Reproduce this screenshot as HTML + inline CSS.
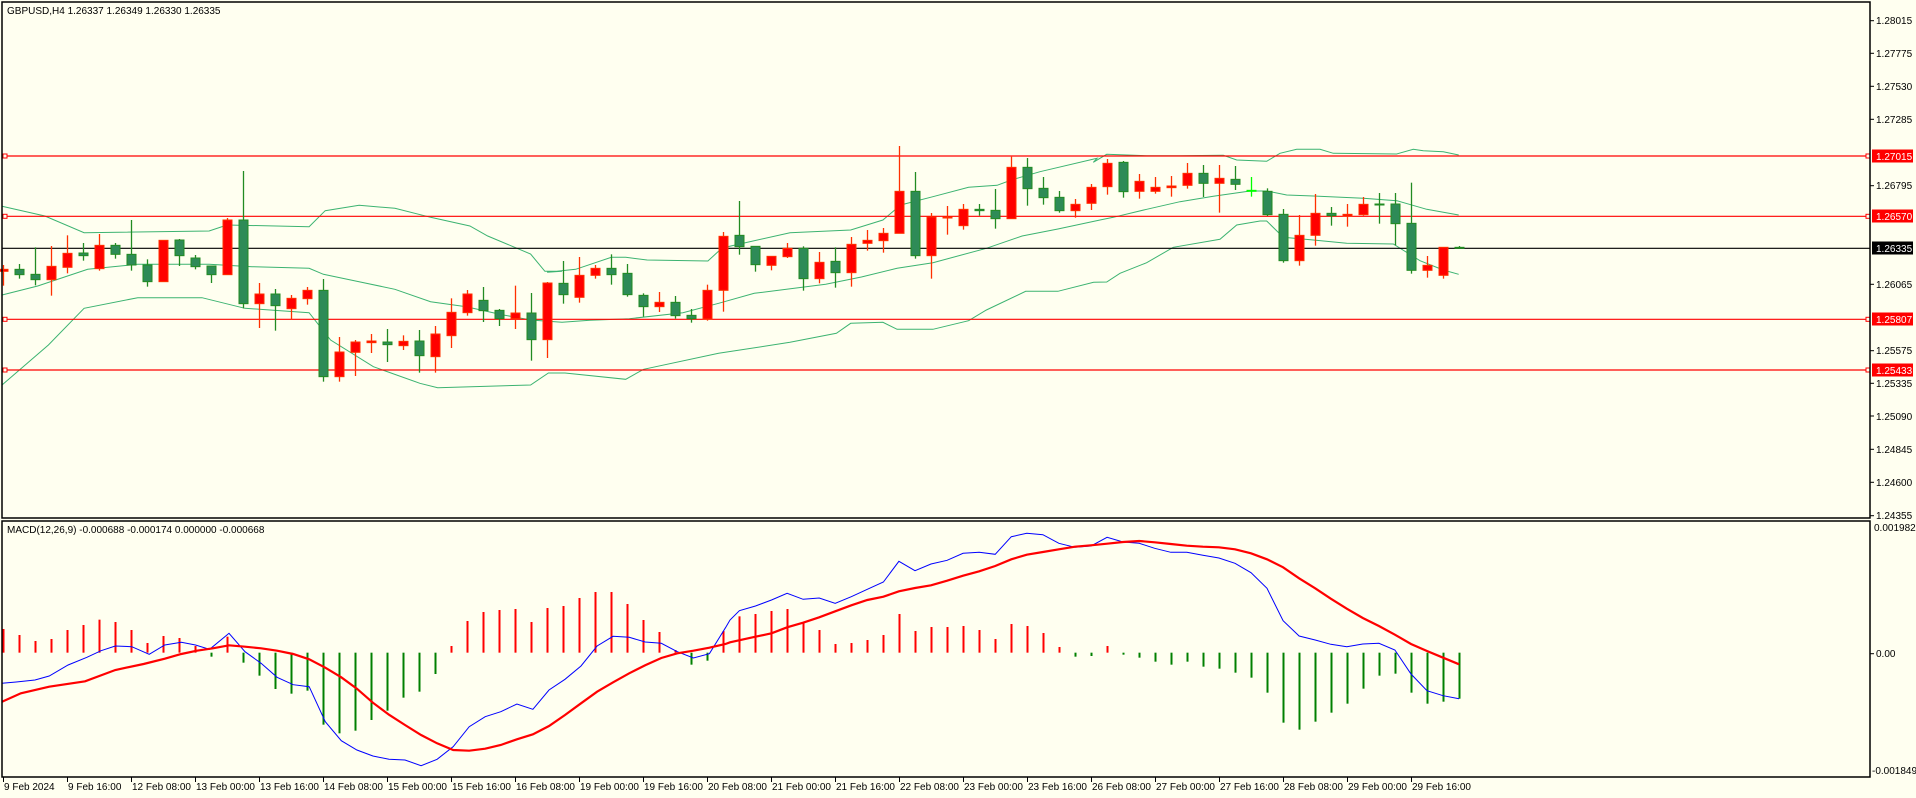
<!DOCTYPE html>
<html><head><meta charset="utf-8"><style>
html,body{margin:0;padding:0;background:#FFFFF0;}
svg{display:block;font-family:"Liberation Sans",sans-serif;}
</style></head><body>
<svg id="s" width="1916" height="798" viewBox="0 0 1916 798" xmlns="http://www.w3.org/2000/svg">
<rect x="0" y="0" width="1916" height="798" fill="#FFFFF0"/>
<g id="bands" fill="none" stroke="#3CB371" stroke-width="1"></g>
<g id="hlines"></g>
<g id="candles"></g>
<g id="macd"></g>
<!-- frames -->
<g fill="none" stroke="#000" stroke-width="1.5">
<rect x="2" y="2" width="1868" height="516"/>
<rect x="2" y="521" width="1868" height="256"/>
</g>
<g id="ticks" stroke="#000" stroke-width="1"></g>
<g font-size="10" fill="#000">
<text x="7" y="14">GBPUSD,H4  1.26337 1.26349 1.26330 1.26335</text>
<text x="7" y="533">MACD(12,26,9) -0.000688 -0.000174 0.000000 -0.000668</text>
<text x="1876" y="24">1.28015</text>
<text x="1876" y="57">1.27775</text>
<text x="1876" y="90">1.27530</text>
<text x="1876" y="123">1.27285</text>
<text x="1876" y="189">1.26795</text>
<text x="1876" y="288">1.26065</text>
<text x="1876" y="354">1.25575</text>
<text x="1876" y="387">1.25335</text>
<text x="1876" y="420">1.25090</text>
<text x="1876" y="453">1.24845</text>
<text x="1876" y="486">1.24600</text>
<text x="1876" y="519">1.24355</text>
<text x="1874" y="531">0.001982</text>
<text x="1876" y="657">0.00</text>
<text x="1872" y="774">-0.001849</text>
</g>
<g font-size="10">
<rect x="1872" y="149.5" width="41" height="13" fill="#FF0000"/><text x="1876" y="160" fill="#fff">1.27015</text>
<rect x="1872" y="209.5" width="41" height="13" fill="#FF0000"/><text x="1876" y="220" fill="#fff">1.26570</text>
<rect x="1872" y="241.5" width="41" height="13" fill="#000"/><text x="1876" y="252" fill="#fff">1.26335</text>
<rect x="1872" y="312.5" width="41" height="13" fill="#FF0000"/><text x="1876" y="323" fill="#fff">1.25807</text>
<rect x="1872" y="363.5" width="41" height="13" fill="#FF0000"/><text x="1876" y="374" fill="#fff">1.25433</text>
</g>
<g font-size="10" fill="#000">
<text x="4" y="790">9 Feb 2024</text>
<text x="68" y="790">9 Feb 16:00</text>
<text x="132" y="790">12 Feb 08:00</text>
<text x="196" y="790">13 Feb 00:00</text>
<text x="260" y="790">13 Feb 16:00</text>
<text x="324" y="790">14 Feb 08:00</text>
<text x="388" y="790">15 Feb 00:00</text>
<text x="452" y="790">15 Feb 16:00</text>
<text x="516" y="790">16 Feb 08:00</text>
<text x="580" y="790">19 Feb 00:00</text>
<text x="644" y="790">19 Feb 16:00</text>
<text x="708" y="790">20 Feb 08:00</text>
<text x="772" y="790">21 Feb 00:00</text>
<text x="836" y="790">21 Feb 16:00</text>
<text x="900" y="790">22 Feb 08:00</text>
<text x="964" y="790">23 Feb 00:00</text>
<text x="1028" y="790">23 Feb 16:00</text>
<text x="1092" y="790">26 Feb 08:00</text>
<text x="1156" y="790">27 Feb 00:00</text>
<text x="1220" y="790">27 Feb 16:00</text>
<text x="1284" y="790">28 Feb 08:00</text>
<text x="1348" y="790">29 Feb 00:00</text>
<text x="1412" y="790">29 Feb 16:00</text>
</g>
</svg>
<script>
var NS="http://www.w3.org/2000/svg";
function el(p,t,a){var e=document.createElementNS(NS,t);for(var k in a)e.setAttribute(k,a[k]);p.appendChild(e);return e;}
var X=function(i){return 3.5+16*i;};
// horizontal lines
var hl=document.getElementById('hlines');
[156,216.3,319.3,370].forEach(function(y){
 el(hl,'line',{x1:2,x2:1870,y1:y,y2:y,stroke:'#FF0000','stroke-width':1.2});
 el(hl,'rect',{x:3,y:y-2,width:4,height:4,fill:'#FFFFF0',stroke:'#FF0000','stroke-width':1});
 el(hl,'rect',{x:1866,y:y-2,width:4,height:4,fill:'#FFFFF0',stroke:'#FF0000','stroke-width':1});
});
el(hl,'line',{x1:2,x2:1870,y1:248.3,y2:248.3,stroke:'#000','stroke-width':1.2});
// ticks
var tk=document.getElementById('ticks');
[20.7,53.3,86.3,119.3,185.7,284.3,350.7,383.3,416,449.3,482.3,515.7,653.7].forEach(function(y){el(tk,'line',{x1:1870,x2:1874,y1:y,y2:y});});
for(var k=0;k<23;k++){var x=3.5+64*k;el(tk,'line',{x1:x,x2:x,y1:777,y2:782});}
// candles: [color, bodyTop, bodyBot, wickTop, wickBot] in zoom units (y=130+z/3)
var C=[
['r',418,424,405,467],['g',418,434,402,446],['g',433,449,352,466],['r',409,449,348,497],['r',370,412,316,430],
['g',369,377,339,392],['r',346,416,312,422],['g',346,373,339,386],['g',373,405,270,422],['g',405,455,388,470],
['r',331,455,331,455],['g',330,377,327,408],['g',384,410,375,418],['g',408,434,408,459],['r',270,434,264,434],
['g',270,521,123,535],['r',492,521,459,594],['g',492,527,477,602],['r',505,536,495,568],['r',481,506,471,524],
['g',481,740,447,755],['r',666,740,621,755],['r',636,667,630,738],['r',633,638,612,669],['g',636,644,597,696],
['r',634,647,616,660],['g',633,677,600,728],['r',612,680,588,728],['r',547,617,505,654],['r',492,548,480,557],
['g',511,542,471,576],['g',541,566,537,588],['r',549,566,467,597],['g',549,629,489,692],['r',459,629,456,684],
['g',460,494,393,521],['r',436,502,381,518],['r',415,436,405,446],['g',415,434,373,464],['g',430,494,402,500],
['g',496,530,490,560],['r',517,530,486,546],['g',517,557,498,566],['g',556,566,537,578],['r',481,567,464,572],
['r',319,481,306,545],['g',316,350,213,374],['g',349,404,349,425],['r',379,406,379,421],['r',355,380,339,384],
['g',355,446,349,482],['r',397,446,366,460],['g',394,428,352,473],['r',343,428,321,470],['r',331,340,300,362],
['r',310,332,294,368],['r',184,310,48,310],['g',184,377,126,386],['r',261,377,249,446],['r',261,264,228,314],
['r',238,287,222,299],['g',238,242,222,257],['g',241,266,177,296],['r',112,266,80,266],['g',112,176,84,227],
['g',175,203,141,224],['g',202,242,183,248],['r',223,242,207,263],['r',172,220,162,240],
['r',100,170,87,194],['g',97,185,93,203],['r',154,184,132,206],['r',172,184,141,191],['r',168,173,138,200],
['r',130,166,99,176],['g',130,160,105,201],['r',145,160,105,248],['g',148,163,108,180],['l',181,183,141,200],
['g',184,254,175,258],['g',253,392,237,398],['r',316,392,255,407],['r',250,316,192,347],['g',250,257,231,287],
['r',253,258,222,290],['r',223,254,201,257],['g',222,224,189,281],['g',222,281,189,346],['g',280,421,158,431],
['r',406,421,378,443],['r',352,436,352,446],['g',352,355,348,355]];
var cg=document.getElementById('candles');
var col={r:['#FF0000','#FF3000'],g:['#2E8B57','#228B22'],l:['#00FF00','#00FF00']};
C.forEach(function(c,i){
 var x=X(i),cc=col[c[0]],bt=130+c[1]/3,bb=130+c[2]/3,wt=130+c[3]/3,wb=130+c[4]/3;
 el(cg,'line',{x1:x,x2:x,y1:wt,y2:wb,stroke:cc[1],'stroke-width':1.3});
 var h=Math.max(bb-bt,1);
 el(cg,'rect',{x:x-4.5,y:bt,width:9,height:h,fill:cc[0],stroke:cc[1],'stroke-width':1});
});
// bands
function pts(arr,ox,fx){return arr.map(function(p){return (ox+p[0]/fx).toFixed(1)+','+(130+p[1]/3).toFixed(1);}).join(' ');}
var B=[
[[[0,229],[120,258],[230,308],[580,303],[630,285],[860,290],[905,242],[1000,226],[1100,235],[1200,262],[1310,288],[1360,318],[1480,372],[1520,424],[1568,424]],
 [[20,427],[100,418],[200,382],[240,382],[300,390],[470,393],[510,354],[700,308],[870,300],[960,270],[1010,225],[1100,200],[1200,172],[1280,166],[1320,150],[1400,125],[1560,85]],
 [[40,97],[80,73],[200,77],[300,77],[430,76],[470,90],[560,94],[600,70],[650,58],[720,58],[760,70],[950,72],[1000,58],[1030,62],[1090,65],[1136,75]]],
[[[0,495],[100,468],[240,418],[380,403],[580,403],[700,410],[860,415],[900,433],[1000,455],[1100,478],[1200,515],[1300,530],[1400,554],[1480,570],[1568,577]],
 [[140,571],[250,566],[400,548],[500,520],[600,490],[800,463],[900,441],[1000,415],[1100,398],[1250,355],[1350,318],[1450,297],[1568,270]],
 [[100,262],[200,238],[300,215],[400,199],[510,183],[560,183],[620,195],[700,198],[850,205],[950,212],[1040,238],[1136,255]]],
[[[0,765],[130,645],[230,535],[380,503],[560,503],[680,535],[860,548],[920,630],[1040,710],[1170,760],[1220,773],[1480,765],[1530,729],[1568,729]],
 [[70,729],[240,748],[290,718],[500,670],[700,637],[830,610],[870,580],[960,577],[1000,598],[1100,598],[1200,572],[1250,540],[1360,484],[1450,484],[1550,457]],
 [[80,456],[120,430],[200,398],[280,352],[420,328],[470,285],[540,273],[560,273],[610,322],[700,330],[800,340],[940,342],[1020,392],[1090,420],[1136,433]]]];
var bg=document.getElementById('bands');
B.forEach(function(b){el(bg,'polyline',{points:pts(b[0],2,2.8)+' '+pts(b[1],540,2.8)+' '+pts(b[2],1080,3)});});
// MACD histogram (zoom units, zero 398 ; y=520+z/3)
var H=[327,345,363,357,330,315,299,306,330,369,348,354,378,410,350,428,467,507,521,512,614,640,632,600,572,533,515,462,378,303,276,270,267,306,264,258,234,216,216,252,300,336,390,434,422,333,289,282,273,267,306,330,372,369,360,345,282,333,321,321,318,330,357,312,318,339,381,410,408,378,404,413,425,434,425,440,446,458,473,518,608,629,605,578,551,506,467,461,518,551,545,536];
var mg=document.getElementById('macd');
var zero=520+398/3;
H.forEach(function(z,i){var y=520+z/3,x=X(i);el(mg,'line',{x1:x,x2:x,y1:zero,y2:y,stroke:z<398?'#FF0000':'#008000','stroke-width':2});});
function mp(arr,ox){return arr.map(function(p){return (ox+p[0]/2.119).toFixed(1)+','+(520+p[1]/3).toFixed(1);}).join(' ');}
var blue1=[[0,490],[30,486],[70,480],[100,468],[140,435],[180,412],[210,392],[240,378],[275,380],[312,403],[345,375],[380,367],[410,375],[440,388],[481,340],[515,395],[549,430],[583,472],[617,494],[651,500],[685,605],[719,662],[752,690],[786,708],[820,718],[854,720],[888,737],[922,718],[956,680],[990,620],[1024,590],[1057,575],[1091,552],[1125,568],[1159,510],[1193,478],[1227,438],[1261,378],[1295,349],[1329,352],[1363,366],[1397,370],[1431,395],[1465,414],[1499,401],[1533,323]];
var blue2=[[0,300],[20,272],[54,258],[88,240],[121,220],[155,238],[189,234],[223,250],[257,230],[291,208],[325,186],[358,124],[392,152],[426,132],[460,121],[494,100],[528,97],[562,103],[596,50],[629,40],[663,44],[697,70],[731,82],[765,78],[799,52],[833,66],[867,70],[900,85],[934,97],[968,97],[1002,106],[1036,114],[1070,130],[1104,158],[1138,205],[1172,302],[1206,348],[1240,360],[1273,373],[1307,380],[1341,372],[1375,370],[1409,390],[1443,462],[1477,512],[1511,527],[1545,536]];
var red1=[[0,545],[40,520],[100,500],[176,484],[240,450],[300,432],[345,416],[380,402],[413,392],[447,385],[481,376],[515,380],[549,385],[583,392],[617,402],[651,418],[685,443],[719,472],[752,506],[786,548],[820,584],[854,615],[888,645],[922,670],[956,690],[990,692],[1024,686],[1057,675],[1091,658],[1125,643],[1159,618],[1193,585],[1227,550],[1261,515],[1295,487],[1329,460],[1363,436],[1397,414],[1431,400],[1465,392],[1499,383],[1533,372]];
var red2=[[0,367],[54,350],[88,340],[121,322],[155,308],[189,292],[223,274],[257,256],[291,240],[325,230],[358,214],[392,204],[426,196],[460,182],[494,167],[528,154],[562,138],[596,118],[629,104],[663,96],[697,88],[731,80],[765,76],[799,71],[833,66],[867,63],[900,67],[934,72],[968,77],[1002,80],[1036,82],[1070,88],[1104,100],[1138,118],[1172,142],[1206,175],[1240,205],[1273,236],[1307,266],[1341,294],[1375,318],[1409,344],[1443,372],[1477,393],[1511,413],[1545,433]];
el(mg,'polyline',{points:mp(blue1,2)+' '+mp(blue2,730),fill:'none',stroke:'#0000FF','stroke-width':1});
el(mg,'polyline',{points:mp(red1,2)+' '+mp(red2,730),fill:'none',stroke:'#FF0000','stroke-width':2.2});
</script>
</body></html>
